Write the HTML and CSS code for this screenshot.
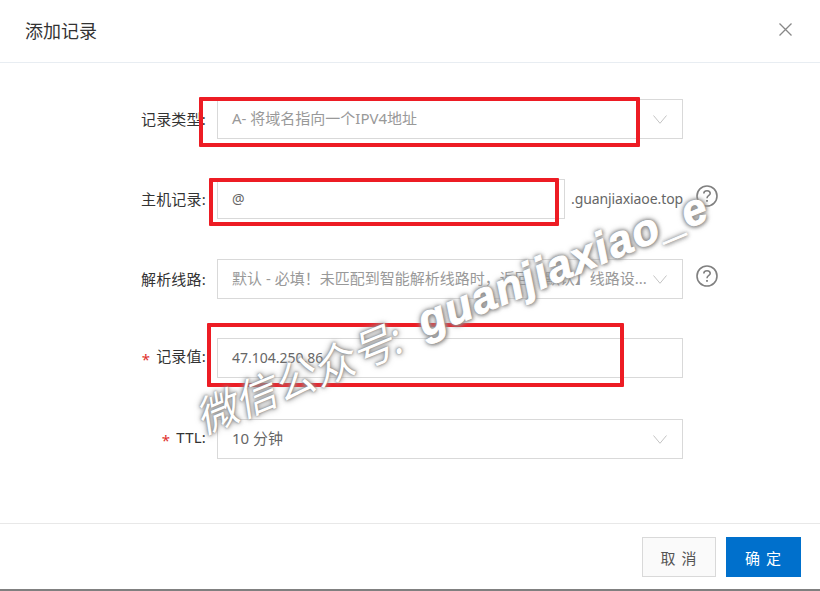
FILE: index.html
```html
<!DOCTYPE html>
<html lang="zh-CN">
<head>
  <meta charset="UTF-8">
  <meta name="viewport" content="width=device-width, initial-scale=1.0">
  <title>添加记录</title>
  <link rel="stylesheet" href="styles.css">
</head>
<body>
  <div class="dialog">
    <div class="dialog-header">
      <span class="dialog-title">添加记录</span>
      <svg class="close-icon" width="13" height="13" viewBox="0 0 13 13">
        <path d="M0.5 0.5L12.5 12.5M12.5 0.5L0.5 12.5" fill="none" stroke="#888" stroke-width="1.3"/>
      </svg>
    </div>

    <div class="dialog-body">
      <div class="form-row">
        <label class="form-label">记录类型:</label>
        <div class="field field-select">
          <span class="field-text muted cjk">A- 将域名指向一个IPV4地址</span>
          <svg class="chevron" width="14" height="9" viewBox="0 0 14 9"><path d="M0.5 0.5L7 8.3L13.5 0.5" fill="none" stroke="#c4c4c4" stroke-width="1"/></svg>
        </div>
      </div>

      <div class="form-row">
        <label class="form-label">主机记录:</label>
        <div class="field field-host">
          <span class="field-text">@</span>
        </div>
        <span class="suffix">.guanjiaxiaoe.top</span>
        <svg class="help-icon help-host" width="22" height="22" viewBox="0 0 22 22">
          <circle cx="11" cy="11" r="10" fill="none" stroke="#808080" stroke-width="1.6"/>
          <path d="M7.8 8.6C7.8 6.8 9.2 5.7 11 5.7C12.8 5.7 14.2 6.8 14.2 8.4C14.2 10.4 11 10.6 11 13.2" fill="none" stroke="#808080" stroke-width="1.6"/>
          <rect x="10.1" y="15" width="1.8" height="1.8" fill="#808080"/>
        </svg>
      </div>

      <div class="form-row">
        <label class="form-label">解析线路:</label>
        <div class="field field-select">
          <span class="field-text muted cjk">默认 - 必填！未匹配到智能解析线路时，返回【默认】线路设...</span>
          <svg class="chevron" width="14" height="9" viewBox="0 0 14 9"><path d="M0.5 0.5L7 8.3L13.5 0.5" fill="none" stroke="#c4c4c4" stroke-width="1"/></svg>
        </div>
        <svg class="help-icon help-line" width="22" height="22" viewBox="0 0 22 22">
          <circle cx="11" cy="11" r="10" fill="none" stroke="#808080" stroke-width="1.6"/>
          <path d="M7.8 8.6C7.8 6.8 9.2 5.7 11 5.7C12.8 5.7 14.2 6.8 14.2 8.4C14.2 10.4 11 10.6 11 13.2" fill="none" stroke="#808080" stroke-width="1.6"/>
          <rect x="10.1" y="15" width="1.8" height="1.8" fill="#808080"/>
        </svg>
      </div>

      <div class="form-row form-row-value">
        <label class="form-label"><span class="required">*</span>记录值:</label>
        <div class="field">
          <span class="field-text">47.104.250.86</span>
        </div>
      </div>

      <div class="form-row">
        <label class="form-label"><span class="required">*</span>TTL:</label>
        <div class="field field-select">
          <span class="field-text cjk">10 分钟</span>
          <svg class="chevron" width="14" height="9" viewBox="0 0 14 9"><path d="M0.5 0.5L7 8.3L13.5 0.5" fill="none" stroke="#c4c4c4" stroke-width="1"/></svg>
        </div>
      </div>
    </div>

    <div class="dialog-footer">
      <button class="btn btn-cancel">取 消</button>
      <button class="btn btn-ok">确 定</button>
    </div>
  </div>

  <!-- annotations on top of the screenshot -->
  <div class="mark mark-type"></div>
  <div class="mark mark-host"></div>
  <div class="mark mark-value"></div>
  <div class="watermark"><span class="wm-cn">微信公众号:</span><span class="wm-en">guanjiaxiao_e</span></div>
</body>
</html>
```

FILE: styles.css
```css
html, body {
  height: 100%;
}

body {
  margin: 0;
  position: relative;
  overflow: hidden;
  background: #fff;
  color: #333;
  font-family: "Noto Sans", "Noto Sans CJK SC", sans-serif;
  font-size: 14px;
}

.dialog {
  height: 589px;
  display: flex;
  flex-direction: column;
  border-bottom: 2px solid #808080;
}

.dialog-header {
  height: 63px;
  flex: none;
  display: flex;
  align-items: center;
  justify-content: space-between;
  padding: 0 28px 3px 25px;
  box-sizing: border-box;
  border-bottom: 1px solid #e8edf2;
}

.dialog-title {
  font-size: 18px;
  color: #333;
}

.dialog-body {
  flex: 1;
  padding-top: 36px;
}

.form-row {
  display: flex;
  align-items: center;
  height: 40px;
  margin-bottom: 40px;
}

.form-row-value {
  margin-top: -1px;
  margin-bottom: 41px;
}

.form-label {
  width: 206px;
  flex: none;
  text-align: right;
  margin-right: 11px;
  padding-bottom: 2px;
  color: #333;
  font-size: 15px;
  letter-spacing: 0.2px;
  white-space: nowrap;
}

.required {
  color: #e0312c;
  font-size: 15px;
  margin-right: 6px;
  vertical-align: -3px;
}

.field {
  width: 466px;
  height: 40px;
  flex: none;
  box-sizing: border-box;
  border: 1px solid #d9d9d9;
  padding: 0 15px 0 14px;
  display: flex;
  align-items: center;
  justify-content: space-between;
  background: #fff;
}

.field-host {
  width: 348px;
}

.field-text {
  color: #666;
  padding-bottom: 2px;
  white-space: nowrap;
}

.field-text.cjk {
  font-size: 15px;
  padding-bottom: 3px;
}

.field-text.muted {
  color: #999;
}

.chevron {
  flex: none;
}

.suffix {
  margin-left: 6px;
  padding-bottom: 2px;
  color: #666;
  letter-spacing: -0.1px;
  white-space: nowrap;
}

.help-icon {
  flex: none;
}

.help-host {
  margin: -6px 0 0 13px;
}

.help-line {
  margin: -6px 0 0 13px;
}

.dialog-footer {
  height: 66px;
  flex: none;
  box-sizing: border-box;
  border-top: 1px solid #e8e8e8;
  display: flex;
  justify-content: flex-end;
  align-items: flex-start;
  gap: 10px;
  padding: 13px 19px 0 0;
}

.btn {
  height: 40px;
  box-sizing: border-box;
  font-family: inherit;
  font-size: 15px;
  border: 1px solid transparent;
  letter-spacing: 1px;
  padding: 0;
}

.btn-cancel {
  width: 74px;
  background: #fafafa;
  border-color: #d9d9d9;
  color: #555;
}

.btn-ok {
  width: 75px;
  background: #0070cc;
  border-color: #0070cc;
  color: #fff;
}

.mark {
  position: absolute;
  box-sizing: border-box;
  border: 4px solid #ed1c24;
  border-radius: 1px;
}

.mark-type {
  left: 199px;
  top: 97px;
  width: 441px;
  height: 50px;
}

.mark-host {
  left: 209px;
  top: 178px;
  width: 350px;
  height: 48px;
}

.mark-value {
  left: 207px;
  top: 323px;
  width: 417px;
  height: 64px;
}

.watermark {
  position: absolute;
  left: 197px;
  top: 386px;
  line-height: 60px;
  color: #fff;
  white-space: nowrap;
  transform: rotate(-22.5deg);
  transform-origin: left center;
}

.wm-cn {
  font-size: 42px;
  font-style: italic;
  font-weight: 400;
  vertical-align: -5px;
  text-shadow: 0 0 2px #808080, 0 0 4px #8a8a8a, 0 0 7px #a0a0a0;
}

.wm-en {
  margin-left: 22px;
  font-family: "Liberation Sans", sans-serif;
  font-size: 44px;
  font-style: italic;
  font-weight: 700;
  letter-spacing: 1.5px;
  -webkit-text-stroke: 1px #fff;
  text-shadow: 0 0 3px #8a8a8a, 0 0 5px #8a8a8a, 0 0 7px #a0a0a0, 1px 1px 4px #8a8a8a;
}
```
